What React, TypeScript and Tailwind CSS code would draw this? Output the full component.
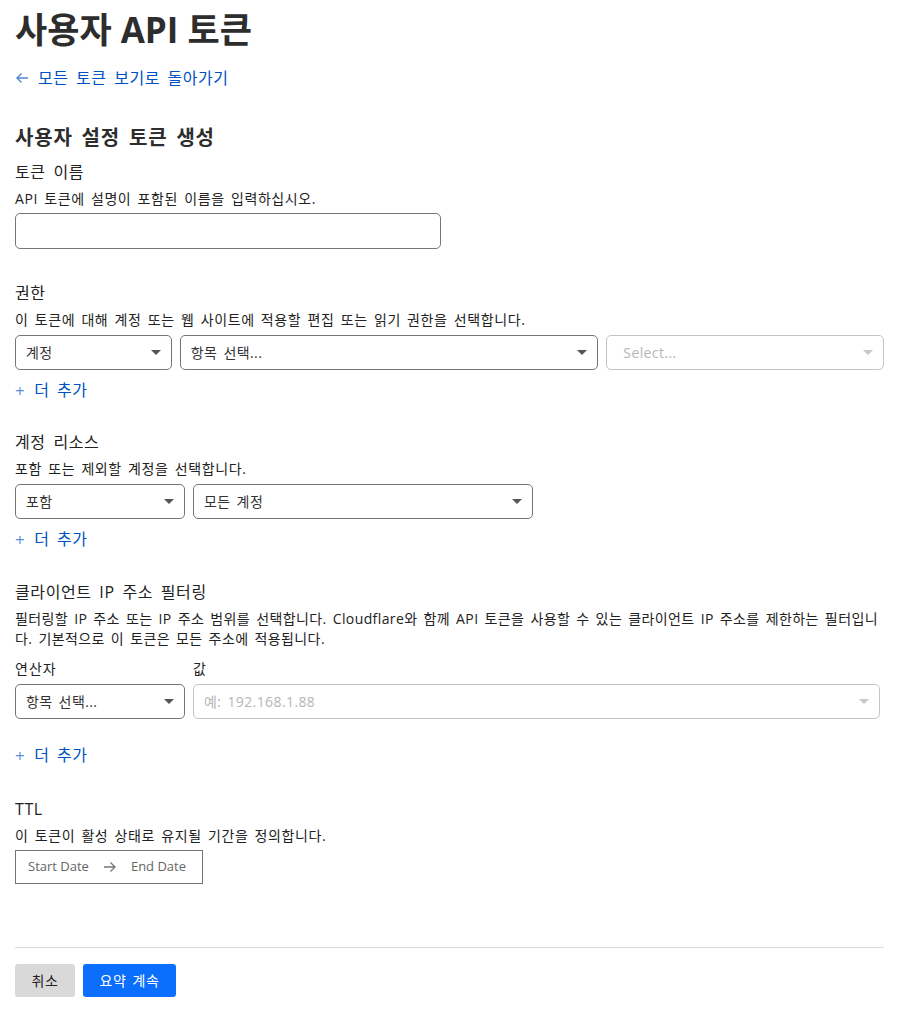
import React from 'react'

const font = { fontFamily: '"Open Sans", "Noto Sans CJK KR", sans-serif' }

const Caret = ({ muted = false }: { muted?: boolean }) => (
  <svg width="10" height="5" viewBox="0 0 10 5" className="shrink-0">
    <path d="M0 0 L10 0 L5 5 Z" fill={muted ? '#c8c8c8' : '#555555'} />
  </svg>
)

const Select = ({
  text,
  width,
  muted = false,
  inset = false,
}: {
  text: string
  width: string
  muted?: boolean
  inset?: boolean
}) => (
  <div
    className={`${width} h-[35px] flex items-center justify-between rounded-[5px] border bg-white pl-[10px] pr-[10px] text-[14px] tracking-[0.4px] [word-spacing:2px] ${
      muted ? 'border-[#c4c4c4] text-[#b5b5b5]' : 'border-[#767676] text-[#333]'
    }`}
  >
    <span className={inset ? 'pl-[6px]' : ''}>{text}</span>
    <Caret muted={muted} />
  </div>
)

const AddMore = () => (
  <a className="mt-[9px] flex items-center gap-[9px] text-[16px] leading-[22px] tracking-[0.5px] text-[#0051c3] [word-spacing:3px]">
    <span className="text-[17px] leading-none text-[#5b8fd8]">+</span>
    <span>더 추가</span>
  </a>
)

const Section = ({
  title,
  desc,
  descClass = 'tracking-[0.6px]',
  children,
}: {
  title: string
  desc: React.ReactNode
  descClass?: string
  children: React.ReactNode
}) => (
  <section className="flex flex-col">
    <h3 className="text-[16px] leading-[22px] tracking-[0.6px] text-[#222] [word-spacing:3px]">{title}</h3>
    <p className={`mt-[6px] text-[14px] leading-[20px] text-[#222] [word-spacing:2px] ${descClass}`}>{desc}</p>
    {children}
  </section>
)

export default function App() {
  return (
    <div style={font} className="min-h-[1013px] bg-white px-[15px] pt-[7px] text-[#222]">
      <h1 className="text-[35px] font-bold leading-[46px] text-[#2d2d2d]">사용자 API 토큰</h1>
      <a className="mt-[14px] flex items-center gap-[9px] text-[16px] leading-[22px] tracking-[0.5px] text-[#0051c3] [word-spacing:3px]">
        <svg width="14" height="12" viewBox="0 0 14 12" fill="none" stroke="#4f86d6" strokeWidth="1.4">
          <path d="M13 6 H2 M6.5 1.5 L2 6 L6.5 10.5" />
        </svg>
        <span>모든 토큰 보기로 돌아가기</span>
      </a>

      <h2 className="mt-[36px] text-[20px] font-bold leading-[26px] tracking-[0.8px] text-[#2d2d2d] [word-spacing:3px]">
        사용자 설정 토큰 생성
      </h2>

      <div className="mt-[10px]">
        <Section title="토큰 이름" desc="API 토큰에 설명이 포함된 이름을 입력하십시오.">
          <div className="mt-[4px] h-[36px] w-[426px] rounded-[5px] border border-[#767676] bg-white" />
        </Section>
      </div>

      <div className="mt-[33px]">
        <Section
          title="권한"
          desc="이 토큰에 대해 계정 또는 웹 사이트에 적용할 편집 또는 읽기 권한을 선택합니다."
        >
          <div className="mt-[5px] flex gap-[8px]">
            <Select text="계정" width="w-[157px]" />
            <Select text="항목 선택..." width="w-[419px]" />
            <Select text="Select..." width="w-[278px]" muted inset />
          </div>
          <AddMore />
        </Section>
      </div>

      <div className="mt-[30px]">
        <Section title="계정 리소스" desc="포함 또는 제외할 계정을 선택합니다.">
          <div className="mt-[5px] flex gap-[8px]">
            <Select text="포함" width="w-[170px]" />
            <Select text="모든 계정" width="w-[340px]" />
          </div>
          <AddMore />
        </Section>
      </div>

      <div className="mt-[31px]">
        <Section
          title="클라이언트 IP 주소 필터링"
          descClass="tracking-[0.4px]"
          desc={
            <>
              필터링할 IP 주소 또는 IP 주소 범위를 선택합니다. Cloudflare와 함께 API 토큰을 사용할 수 있는 클라이언트 IP
              주소를 제한하는 필터입니다. 기본적으로 이 토큰은 모든 주소에 적용됩니다.
            </>
          }
        >
          <div className="mt-[10px] flex gap-[8px]">
            <div className="flex w-[170px] flex-col gap-[5px]">
              <span className="text-[14px] leading-[20px] tracking-[1px]">연산자</span>
              <Select text="항목 선택..." width="w-[170px]" />
            </div>
            <div className="flex flex-1 flex-col gap-[5px] pr-[4px]">
              <span className="text-[14px] leading-[20px]">값</span>
              <Select text="예: 192.168.1.88" width="w-full" muted />
            </div>
          </div>
          <div className="mt-[16px]">
            <AddMore />
          </div>
        </Section>
      </div>

      <div className="mt-[32px]">
        <Section title="TTL" desc="이 토큰이 활성 상태로 유지될 기간을 정의합니다.">
          <div className="mt-[4px] flex h-[34px] w-[188px] items-center gap-[14px] border border-[#767676] px-[12px] text-[13px] text-[#666]">
            <span>Start Date</span>
            <svg width="14" height="12" viewBox="0 0 14 12" fill="none" stroke="#777" strokeWidth="1.3">
              <path d="M1 6 H12 M7.5 1.5 L12 6 L7.5 10.5" />
            </svg>
            <span>End Date</span>
          </div>
        </Section>
      </div>

      <div className="mt-[63px] border-t border-[#d9d9d9]" />

      <div className="mt-[16px] flex gap-[8px] pb-[16px]">
        <button className="h-[33px] w-[60px] rounded-[3px] bg-[#d9d9d9] text-[14px] tracking-[0.6px] text-[#222]">취소</button>
        <button className="h-[33px] w-[93px] rounded-[3px] bg-[#0b6efd] text-[14px] tracking-[0.6px] text-white [word-spacing:2px]">
          요약 계속
        </button>
      </div>
    </div>
  )
}
